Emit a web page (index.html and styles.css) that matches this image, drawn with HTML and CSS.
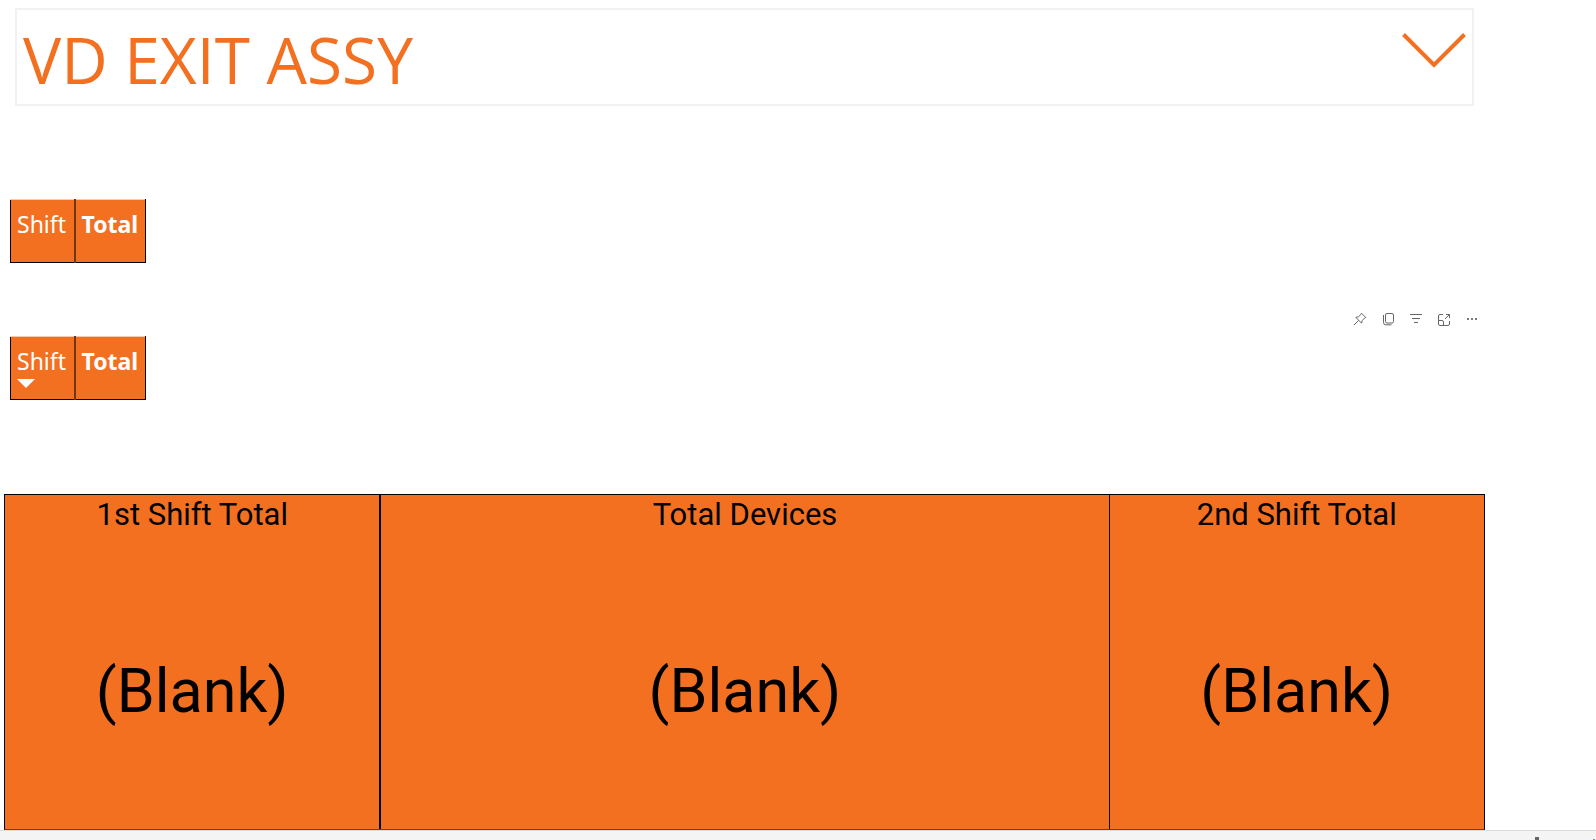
FILE: index.html
```
<!DOCTYPE html>
<html lang="en">
<head>
<meta charset="utf-8">
<title>VD EXIT ASSY</title>
<link rel="stylesheet" href="styles.css">
</head>
<body>
<main class="report">
  <div class="slicer">
    <select class="slicer-select" aria-label="Station">
      <option>VD EXIT ASSY</option>
    </select>
    <svg class="slicer-chevron" viewBox="0 0 64 36" aria-hidden="true"><path d="M1.500 1.500 L32 32 L62.500 1.500"/></svg>
  </div>

  <section class="matrix-visual">
    <table class="matrix">
      <tr><th class="shift" scope="col">Shift</th><th class="total" scope="col">Total</th></tr>
    </table>
  </section>

  <section class="matrix-visual">
    <div class="toolbar">
      <button type="button" class="tool" aria-label="Pin visual"><svg viewBox="0 0 14 14"><path d="M8.500 1.200 L12.800 5.500 L11.500 6.200 L9.300 8.400 L8.600 11.200 L2.800 5.400 L5.600 4.700 L7.800 2.500 Z M5.500 8.500 L1 13"/></svg></button>
      <button type="button" class="tool" aria-label="Copy visual"><svg viewBox="0 0 14 14"><rect x="4.500" y="1.500" width="8" height="9.500" rx="1.500"/><path d="M2.500 3 V10.500 Q2.500 12.800 4.800 12.800 H10.500"/></svg></button>
      <button type="button" class="tool" aria-label="Filters"><svg viewBox="0 0 14 14"><path d="M1 2.500 H13 M3 6.500 H11 M5 10.500 H9"/></svg></button>
      <button type="button" class="tool" aria-label="Focus mode"><svg viewBox="0 0 14 14"><path d="M6 2.500 H3 Q1.500 2.500 1.500 4 V12 Q1.500 13.500 3 13.500 H11 Q12.500 13.500 12.500 12 V9 M1.500 8.500 H5 Q6.500 8.500 6.500 10 V13.500 M8 7 L12.500 2.500 M9 2.500 H12.500 V6"/></svg></button>
      <button type="button" class="tool" aria-label="More options"><svg viewBox="0 0 14 14"><g class="dots"><rect x="2" y="6" width="2" height="2"/><rect x="6" y="6" width="2" height="2"/><rect x="10" y="6" width="2" height="2"/></g></svg></button>
    </div>
    <table class="matrix">
      <tr><th class="shift" scope="col">Shift<svg class="sort" viewBox="0 0 18 9" aria-label="Sorted descending"><path d="M0 0 H18 L9 9 Z"/></svg></th><th class="total" scope="col">Total</th></tr>
    </table>
  </section>

  <section class="cards">
    <article class="card"><h2 class="card-title">1st Shift Total</h2><p class="card-value">(Blank)</p></article>
    <article class="card"><h2 class="card-title">Total Devices</h2><p class="card-value">(Blank)</p></article>
    <article class="card"><h2 class="card-title">2nd Shift Total</h2><p class="card-value">(Blank)</p></article>
  </section>
</main>
<footer class="status-bar"><span class="status-mark"></span><span class="status-edge"></span></footer>
</body>
</html>
```
FILE: styles.css
```
* { box-sizing: border-box; }

body {
  margin: 0;
  min-height: 100vh;
  display: flex;
  flex-direction: column;
  background: #fff;
  font-family: "Noto Sans", "Open Sans", sans-serif;
}

.report {
  flex: 1;
  display: flex;
  flex-direction: column;
  padding: 8px 111px 0 4px;
}

.slicer {
  display: grid;
  margin: 0 11px;
  border: 2px solid #f1f1f1;
}

.slicer-select,
.slicer-chevron { grid-area: 1 / 1; }

.slicer-select {
  appearance: none;
  width: 100%;
  height: 94px;
  padding: 4px 80px 0 6px;
  border: 0;
  border-radius: 0;
  background: transparent;
  color: #f37021;
  font-family: "Open Sans", sans-serif;
  font-size: 64px;
}

.slicer-chevron {
  justify-self: end;
  width: 64px;
  height: 36px;
  margin: 23px 6px 0 0;
  fill: none;
  stroke: #f37021;
  stroke-width: 4;
  pointer-events: none;
}

.matrix-visual {
  height: 137px;
  padding: 93px 0 0 6px;
}

.matrix-visual + .matrix-visual { padding-top: 69px; }

.matrix-visual + .matrix-visual .matrix { margin-top: 10px; }

.matrix {
  border-collapse: collapse;
  color: #fff;
  background: #f37021;
  font-size: 23px;
  line-height: 28px;
}

.matrix th {
  height: 63px;
  padding: 10px 6px 0;
  border: 1px solid #000;
  border-top-color: #f9c9ab;
  text-align: left;
  vertical-align: top;
}

.matrix .shift { width: 64px; font-weight: 400; border-right: 2px solid #733610; }
.matrix .total { width: 71px; font-weight: 700; }

.sort {
  display: block;
  width: 18px;
  height: 9px;
  margin-top: 4px;
  fill: #fff;
}

.toolbar {
  display: flex;
  justify-content: flex-end;
  gap: 14px;
  margin-right: 6px;
}

.tool {
  width: 14px;
  height: 14px;
  padding: 0;
  border: 0;
  background: transparent;
}

.tool svg {
  display: block;
  width: 14px;
  height: 14px;
  fill: none;
  stroke: #666;
  stroke-width: 1;
}

.tool .dots { fill: #777; stroke: none; }

.cards {
  flex: 1;
  display: grid;
  grid-template-columns: 376fr 729fr 376fr;
  margin-top: 114px;
  border: 1px solid #000;
  border-bottom-color: #83390c;
  background: #f37021;
}

.card {
  display: flex;
  flex-direction: column;
  min-height: 334px;
  color: #000;
  font-family: Roboto, sans-serif;
  text-align: center;
}

.card + .card { border-left: 1px solid #000; }
.card:first-child { border-right: 1px solid #000; }

.card-title {
  margin: 0;
  font-size: 31px;
  font-weight: 400;
  line-height: 40px;
}

.card-value {
  flex: 1;
  display: flex;
  align-items: center;
  justify-content: center;
  margin: 0;
  padding-top: 18px;
  font-size: 61px;
  line-height: 72px;
}

.status-bar {
  display: flex;
  justify-content: flex-end;
  align-items: flex-end;
  gap: 54px;
  height: 10px;
  border-top: 1px solid #dcdcdc;
  background: #f4f4f4;
}

.status-mark { width: 4px; height: 3px; background: #666; }
.status-edge { width: 2px; height: 1px; margin-right: 1px; background: #8090a0; }
```
